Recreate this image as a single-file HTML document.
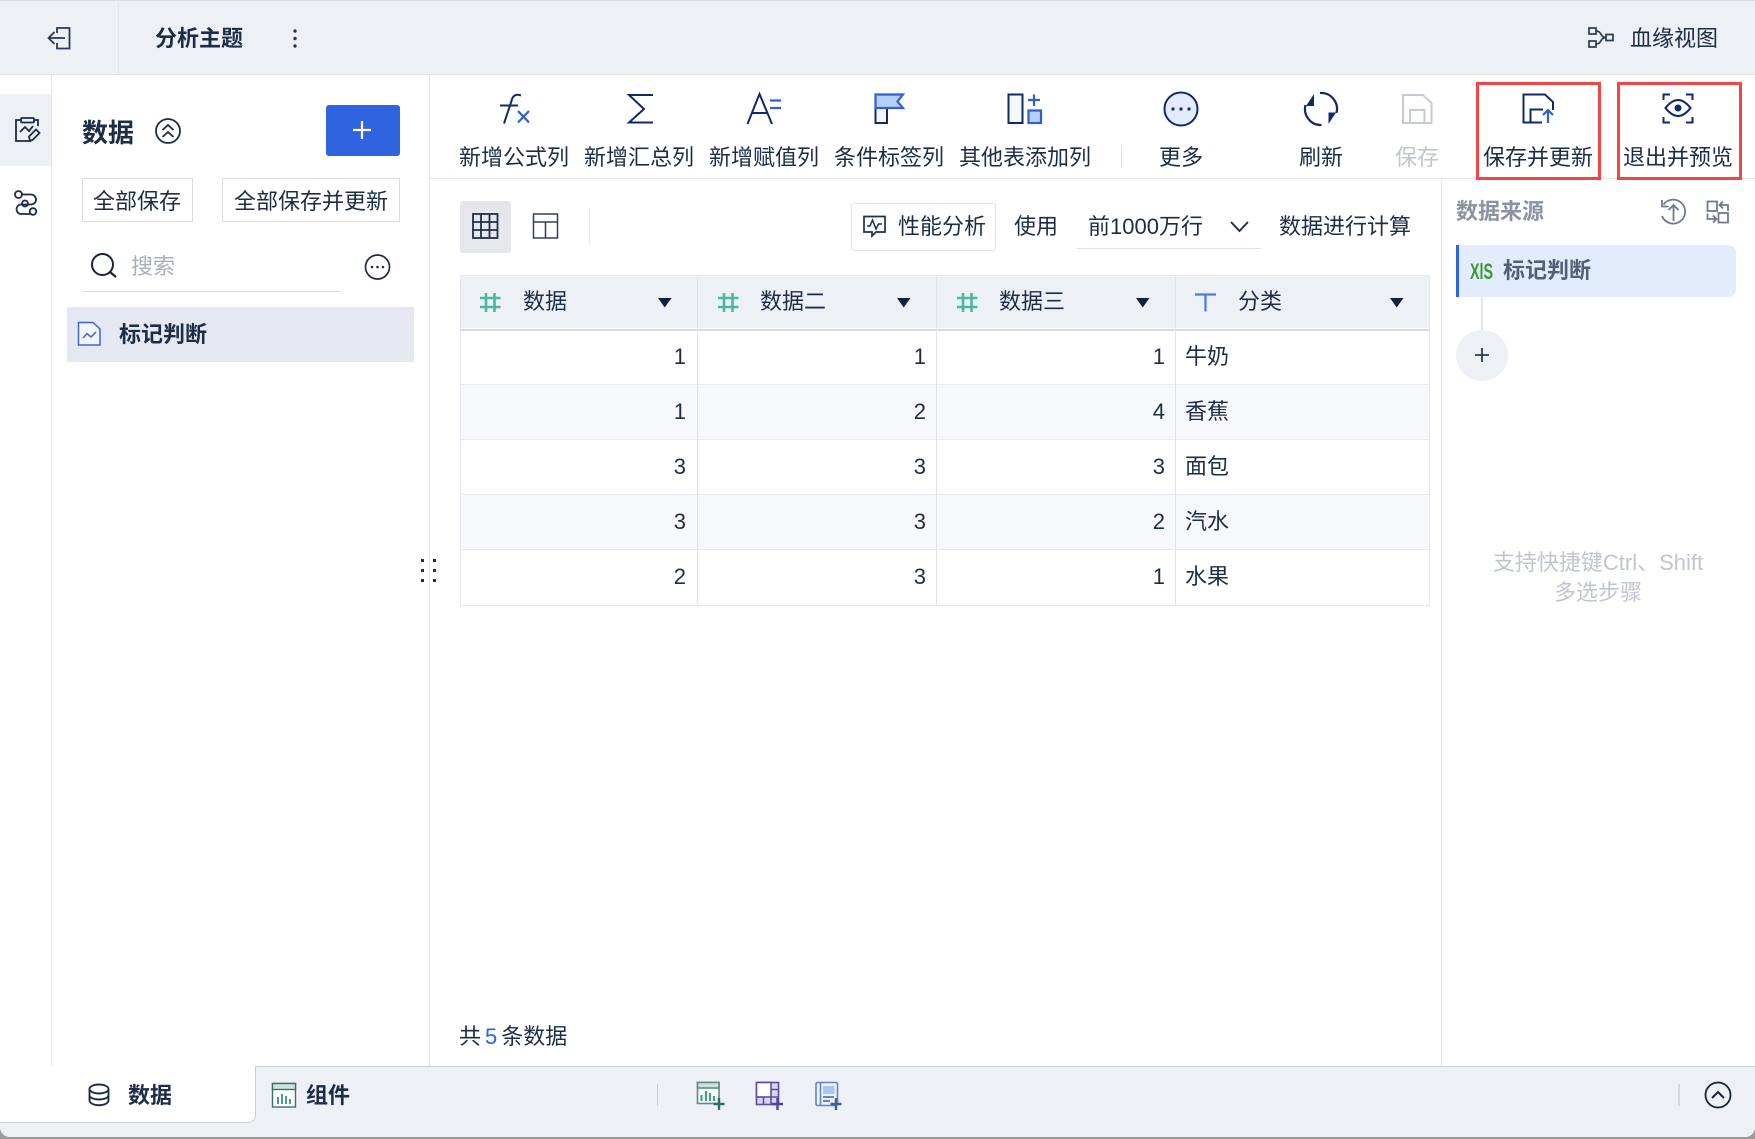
<!DOCTYPE html>
<html lang="zh-CN"><head><meta charset="utf-8"><title>分析主题</title>
<style>
html,body{margin:0;padding:0;width:1755px;height:1139px;overflow:hidden;background:#9b9b9b}
#w{position:absolute;left:0;top:0;width:1755px;height:1137px;background:#fff;overflow:hidden;border-radius:0 0 10px 10px;font-family:"Liberation Sans","Noto Sans CJK SC",sans-serif;font-size:22px;color:#1d2c47}
.b{position:absolute}
.t{position:absolute;line-height:30px;height:30px;white-space:nowrap}
.bd{font-weight:700}
.r{text-align:right;width:60px}
svg{position:absolute;left:0;top:0}
</style></head><body><div id="w">
<!-- backgrounds -->
<div class="b" style="left:0;top:0;width:1755px;height:75px;background:#edf0f5;border-top:1px solid #d9dcdf;border-bottom:1px solid #e3e6ec;box-sizing:border-box"></div>
<div class="b" style="left:118px;top:0;width:1px;height:74px;background:#e3e6ec"></div>
<div class="b" style="left:0;top:94px;width:51px;height:72px;background:#edf0f5"></div>
<div class="b" style="left:51px;top:75px;width:1px;height:991px;background:#e6e8ee"></div>
<div class="b" style="left:429px;top:75px;width:1px;height:991px;background:#e6e8ee"></div>
<div class="b" style="left:430px;top:178px;width:1325px;height:1px;background:#e6e8ee"></div>
<div class="b" style="left:1441px;top:178px;width:1px;height:888px;background:#e6e8ee"></div>
<!-- left panel -->
<div class="b" style="left:326px;top:105px;width:74px;height:51px;background:#2f63df;border-radius:3px"></div>
<div class="b" style="left:82px;top:178px;width:111px;height:44px;border:1px solid #d9dce5;box-sizing:border-box"></div>
<div class="b" style="left:222px;top:178px;width:178px;height:44px;border:1px solid #d9dce5;box-sizing:border-box"></div>
<div class="b" style="left:82px;top:291px;width:259px;height:1px;background:#d9dce3"></div>
<div class="b" style="left:67px;top:307px;width:347px;height:55px;background:#e5e8f0"></div>
<!-- toolbar boxes -->
<div class="b" style="left:460px;top:201px;width:51px;height:52px;background:#e5e7ec;border-radius:3px"></div>
<div class="b" style="left:589px;top:209px;width:1px;height:36px;background:#e9ebf0"></div>
<div class="b" style="left:851px;top:203px;width:145px;height:48px;border:1px solid #dde1ea;border-radius:3px;box-sizing:border-box"></div>
<div class="b" style="left:1077px;top:248px;width:184px;height:1px;background:#dde1ea"></div>
<div class="b" style="left:1121px;top:145px;width:1px;height:23px;background:#dde1ea"></div>
<!-- table -->
<div class="b" style="left:460px;top:275px;width:970px;height:53px;background:#edf0f5;border:1px solid #e6e8ee;border-bottom:0;box-sizing:border-box"></div>
<div class="b" style="left:460px;top:329px;width:970px;height:2px;background:#d8dbe3"></div>
<div class="b" style="left:461px;top:385px;width:968px;height:54px;background:#f7f8fc"></div>
<div class="b" style="left:461px;top:495px;width:968px;height:54px;background:#f7f8fc"></div>
<div class="b" style="left:460px;top:384px;width:970px;height:1px;background:#e6e9f0"></div>
<div class="b" style="left:460px;top:439px;width:970px;height:1px;background:#e6e9f0"></div>
<div class="b" style="left:460px;top:494px;width:970px;height:1px;background:#e6e9f0"></div>
<div class="b" style="left:460px;top:549px;width:970px;height:1px;background:#e6e9f0"></div>
<div class="b" style="left:460px;top:605px;width:970px;height:1px;background:#e6e9f0"></div>
<div class="b" style="left:460px;top:275px;width:1px;height:331px;background:#e6e9f0"></div>
<div class="b" style="left:697px;top:275px;width:1px;height:331px;background:#e0e3ea"></div>
<div class="b" style="left:936px;top:275px;width:1px;height:331px;background:#e0e3ea"></div>
<div class="b" style="left:1175px;top:275px;width:1px;height:331px;background:#e0e3ea"></div>
<div class="b" style="left:1429px;top:275px;width:1px;height:331px;background:#e6e9f0"></div>
<!-- right panel -->
<div class="b" style="left:1456px;top:245px;width:280px;height:52px;background:#e3ecfd;border-left:3px solid #2f63df;border-radius:0 8px 8px 0;box-sizing:border-box"></div>
<div class="b" style="left:1481px;top:297px;width:2px;height:34px;background:#e2e5ea"></div>
<div class="b" style="left:1456px;top:330px;width:52px;height:51px;background:#edf0f5;border-radius:50%"></div>
<!-- red boxes -->
<div class="b" style="left:1476px;top:82px;width:125px;height:98px;border:3px solid #f44545;box-sizing:border-box"></div>
<div class="b" style="left:1617px;top:82px;width:125px;height:98px;border:3px solid #f44545;box-sizing:border-box"></div>
<!-- bottom -->
<div class="b" style="left:0;top:1066px;width:1755px;height:71px;background:#edf0f5;border-top:1px solid #c9ced8;box-sizing:border-box"></div>
<div class="b" style="left:0;top:1066px;width:256px;height:57px;background:#fff;border-right:1px solid #c9ced8;border-bottom:1px solid #c9ced8;border-radius:0 0 8px 0;box-sizing:border-box"></div>
<div class="b" style="left:657px;top:1084px;width:1px;height:22px;background:#c9ced8"></div>
<div class="b" style="left:1678px;top:1084px;width:2px;height:22px;background:#d3d7df"></div>

<!-- text -->
<div class="t bd" style="left:155px;top:24px">分析主题</div>
<div class="t" style="left:1630px;top:24px">血缘视图</div>
<div class="t bd" style="left:82px;top:118px;font-size:26px">数据</div>
<div class="t" style="left:93px;top:187px">全部保存</div>
<div class="t" style="left:234px;top:187px">全部保存并更新</div>
<div class="t" style="left:131px;top:252px;color:#a9afba">搜索</div>
<div class="t bd" style="left:119px;top:320px">标记判断</div>
<div class="t" style="left:459px;top:143px">新增公式列</div>
<div class="t" style="left:584px;top:143px">新增汇总列</div>
<div class="t" style="left:709px;top:143px">新增赋值列</div>
<div class="t" style="left:834px;top:143px">条件标签列</div>
<div class="t" style="left:959px;top:143px">其他表添加列</div>
<div class="t" style="left:1159px;top:143px">更多</div>
<div class="t" style="left:1299px;top:143px">刷新</div>
<div class="t" style="left:1395px;top:143px;color:#c0c5ce">保存</div>
<div class="t" style="left:1483px;top:143px">保存并更新</div>
<div class="t" style="left:1623px;top:143px">退出并预览</div>
<div class="t" style="left:898px;top:212px">性能分析</div>
<div class="t" style="left:1014px;top:212px">使用</div>
<div class="t" style="left:1088px;top:212px">前1000万行</div>
<div class="t" style="left:1279px;top:212px">数据进行计算</div>
<div class="t" style="left:523px;top:287px">数据</div>
<div class="t" style="left:760px;top:287px">数据二</div>
<div class="t" style="left:999px;top:287px">数据三</div>
<div class="t" style="left:1238px;top:287px">分类</div>
<div class="t r" style="left:626px;top:342px">1</div><div class="t r" style="left:866px;top:342px">1</div><div class="t r" style="left:1105px;top:342px">1</div><div class="t" style="left:1185px;top:342px">牛奶</div>
<div class="t r" style="left:626px;top:397px">1</div><div class="t r" style="left:866px;top:397px">2</div><div class="t r" style="left:1105px;top:397px">4</div><div class="t" style="left:1185px;top:397px">香蕉</div>
<div class="t r" style="left:626px;top:452px">3</div><div class="t r" style="left:866px;top:452px">3</div><div class="t r" style="left:1105px;top:452px">3</div><div class="t" style="left:1185px;top:452px">面包</div>
<div class="t r" style="left:626px;top:507px">3</div><div class="t r" style="left:866px;top:507px">3</div><div class="t r" style="left:1105px;top:507px">2</div><div class="t" style="left:1185px;top:507px">汽水</div>
<div class="t r" style="left:626px;top:562px">2</div><div class="t r" style="left:866px;top:562px">3</div><div class="t r" style="left:1105px;top:562px">1</div><div class="t" style="left:1185px;top:562px">水果</div>
<div class="t" style="left:459px;top:1022px">共<span style="color:#2f63df;margin:0 4px">5</span>条数据</div>
<div class="t bd" style="left:1456px;top:197px;color:#8a92a3">数据来源</div>
<div class="t bd" style="left:1503px;top:256px;color:#525f77">标记判断</div>
<div class="t" style="left:1441px;top:548px;width:314px;text-align:center;color:#c0c5ce">支持快捷键Ctrl、Shift</div>
<div class="t" style="left:1441px;top:578px;width:314px;text-align:center;color:#c0c5ce">多选步骤</div>
<div class="t bd" style="left:128px;top:1081px">数据</div>
<div class="t bd" style="left:306px;top:1081px">组件</div>

<!-- icons -->
<svg width="1755" height="1139" viewBox="0 0 1755 1139" fill="none" stroke-width="2">
<g stroke="#2a3a55" stroke-width="1.8">
<path d="M57 33V28H69.5V48.5H57V43"/><path d="M65 38H48.5M54.5 32L48.5 38L54.5 44"/>
</g>
<g fill="#2a3a55"><circle cx="295" cy="31" r="1.7"/><circle cx="295" cy="38.5" r="1.7"/><circle cx="295" cy="46" r="1.7"/></g>
<g stroke="#2a3a55" stroke-width="1.7">
<rect x="1589" y="28" width="7" height="6"/><rect x="1589" y="41" width="7" height="6"/><rect x="1606" y="34.5" width="7" height="6"/>
<path d="M1596 31C1602 31 1600 37.5 1606 37.5M1596 44C1602 44 1600 37.5 1606 37.5"/>
</g>
<!-- rail -->
<g stroke="#1d2c47" stroke-width="1.8">
<path d="M21 120H16V141H31M34 120H38V126"/><rect x="21" y="118" width="13" height="4.5" rx="1"/>
<path d="M20 132L25 127L29 131L33 126"/><path d="M30 141L29 136.5L36 129.5L39.5 133L32.5 140Z"/>
<circle cx="18.5" cy="194.5" r="3.5"/><path d="M22 194.5H31A5 5 0 0 1 31 204.5H20A5 5 0 0 0 20 214H30"/><circle cx="25" cy="203.5" r="3"/><circle cx="33" cy="211.5" r="3.3"/>
</g>
<!-- panel -->
<g stroke="#1d2c47" stroke-width="1.8">
<circle cx="168" cy="131" r="12"/><path d="M162.5 130L168 125L173.5 130M162.5 137L168 132L173.5 137"/>
</g>
<path d="M362 121V139M353 130H371" stroke="#fff" stroke-width="2.2"/>
<circle cx="102.5" cy="264.5" r="10.5" stroke="#16233b"/><path d="M110 272L116 277" stroke="#16233b" stroke-width="2.2"/>
<circle cx="377.5" cy="267" r="12" stroke="#1d2c47" stroke-width="1.7"/>
<g fill="#1d2c47"><circle cx="372" cy="267" r="1.3"/><circle cx="377.5" cy="267" r="1.3"/><circle cx="383" cy="267" r="1.3"/></g>
<path d="M78.5 322.5H93L100 329V345H78.5Z" stroke="#3e63d6" stroke-width="1.5" fill="#f2f5fd"/>
<path d="M83 338L87 333.5L91 337L96 332" stroke="#3e63d6" stroke-width="1.5"/>
<!-- toolbar -->
<g stroke="#10296c" stroke-width="2">
<path d="M521 95.5C515.5 93.5 512.5 96 511.5 101L504 123.5M500 105.5H518"/>
<path d="M653 95H629L644 109L629 122.5H653"/>
<path d="M747.5 124L759.5 94L772 124M752 113H767.5"/>
<rect x="1008.5" y="94.5" width="14" height="28.5" fill="#f4f8ff"/>
<circle cx="1181" cy="109" r="16.5" fill="#e3ecfd"/>
<path d="M875.5 108V123H887V108" fill="#f2f6ff"/>
<path d="M1320 93A16 16 0 0 1 1336.5 113M1321.5 125A16 16 0 0 1 1305.5 105" stroke-width="2.2"/>
<path d="M1523.5 110V94.5H1545L1553 102V110M1523.5 94.5V122.5H1542M1530.5 122.5V109.5H1543"/>
<path d="M1663.5 100V94.5H1670M1686 94.5H1692.5V100M1663.5 117V122.5H1670M1686 122.5H1692.5V117"/>
<path d="M1665.5 108Q1678 92 1690.5 108Q1678 124 1665.5 108Z"/>
</g>
<g stroke="#2f5fd0" stroke-width="2.2">
<path d="M518 111L529 122.5M529 111L518 122.5"/>
<path d="M770 100.5H781M770 108H781"/>
<path d="M875.5 94.5H903L897.5 101.5L903 108H875.5Z" fill="#b7cffb"/>
<path d="M1034 94.5V106M1028 100H1040"/>
<rect x="1028.5" y="110.5" width="12.5" height="12.5" fill="#b7cffb"/>
<path d="M1548 123V110M1543 115L1548 110L1553 115"/>
</g>
<g fill="#10296c">
<rect x="1171.5" y="107.5" width="3" height="3"/><rect x="1179.5" y="107.5" width="3" height="3"/><rect x="1187.5" y="107.5" width="3" height="3"/>
<path d="M1314 94L1314 106L1306 106Z"/><path d="M1328.5 124L1328.5 112.5L1336 112.5Z"/>
<circle cx="1678" cy="108" r="3.5"/>
</g>
<g stroke="#c5cad4" stroke-width="2">
<path d="M1403 95H1423L1431.5 103V123H1403Z"/><path d="M1410 123V110H1424.5V123"/>
</g>
<!-- toggles -->
<g stroke="#1f304b" stroke-width="1.8">
<rect x="473" y="214" width="24.5" height="24"/><path d="M481 214V238M489.5 214V238M473 222H497.5M473 230H497.5"/>
<rect x="533.5" y="214" width="24" height="24" stroke="#2f4058" stroke-width="1.5"/><path d="M533.5 222H557.5M545.5 222V238" stroke="#2f4058" stroke-width="1.5"/>
<path d="M864 216.5H885V232H876L872 236V232H864Z" stroke-width="1.7"/><path d="M867 226H870L872.5 220L876 229L878.5 224H882" stroke-width="1.5"/>
</g>
<path d="M1231 222L1239.5 231L1248 222" stroke="#1d2c47" stroke-width="1.9"/>
<!-- header icons -->
<g stroke="#4db6a4" stroke-width="2.6">
<path d="M486 293V312M494.5 293V312M480 298H500.5M480 307H500.5"/>
<path d="M724 293V312M732.5 293V312M718 298H738.5M718 307H738.5"/>
<path d="M963 293V312M971.5 293V312M957 298H977.5M957 307H977.5"/>
</g>
<path d="M1195 294.5H1216M1205.5 294.5V311.5" stroke="#4a7be8" stroke-width="2.2"/>
<g fill="#10203e"><path d="M658 298H671.5L664.7 307.5Z"/><path d="M897 298H910.5L903.7 307.5Z"/><path d="M1136 298H1149.5L1142.7 307.5Z"/><path d="M1390 298H1403.5L1396.7 307.5Z"/></g>
<!-- drag dots -->
<g fill="#1a2f55"><rect x="421" y="559" width="3" height="3"/><rect x="433" y="559" width="3" height="3"/><rect x="421" y="569" width="3" height="3"/><rect x="433" y="569" width="3" height="3"/><rect x="421" y="579" width="3" height="3"/><rect x="433" y="579" width="3" height="3"/></g>
<!-- right panel -->
<g stroke="#6d7a8f" stroke-width="1.8">
<path d="M1663.5 204.5A12 12 0 1 1 1662 216"/><path d="M1662 200V206.5H1668.5"/><path d="M1673.5 221V205M1668.5 210L1673.5 205L1678.5 210"/>
<rect x="1707.5" y="201.5" width="9.5" height="9.5"/><rect x="1718.5" y="213" width="9.5" height="9.5"/>
<path d="M1728 211V205H1720M1723 201.5L1719.5 205L1723 208.5M1707.5 213.5V219H1716M1713 215.5L1716.5 219L1713 222.5"/>
</g>
<text x="1470" y="279" font-family="Liberation Sans,sans-serif" font-size="22" font-weight="700" fill="#3a9a2e" textLength="23" lengthAdjust="spacingAndGlyphs">XlS</text>
<path d="M1482 348V362M1475 355H1489" stroke="#2a3a55" stroke-width="1.8"/>
<!-- bottom -->
<g stroke="#1d2c47" stroke-width="1.9">
<ellipse cx="99" cy="1089" rx="9.5" ry="4.5"/><path d="M89.5 1089V1100C89.5 1107 108.5 1107 108.5 1100V1089M89.5 1095C89.5 1101 108.5 1101 108.5 1095"/>
</g>
<g stroke="#3c6f68" stroke-width="1.4">
<rect x="272.5" y="1083.5" width="23" height="23.5" fill="#fff"/><rect x="272.5" y="1083.5" width="23" height="6" fill="#cfe3de"/>
<path d="M278 1104V1097M282 1104V1094M286 1104V1096M290 1104V1099" stroke="#4f9a8e" stroke-width="2"/>
</g>
<g stroke="#5f8c85" stroke-width="1.6">
<rect x="697.5" y="1082.5" width="21.5" height="21" fill="#f4f8f7"/><rect x="697.5" y="1082.5" width="21.5" height="5.5" fill="#cfe3de"/>
<path d="M701.5 1101V1095M706 1101V1091M710 1101V1093M714 1101V1096" stroke="#4f9a8e" stroke-width="2.2"/>
</g>
<path d="M719 1098V1110M713.5 1104H724.5" stroke="#2f6b68" stroke-width="2.4"/>
<g stroke="#5b4baa" stroke-width="1.6">
<rect x="756.5" y="1082.5" width="22" height="22" fill="#d9d6f2"/><rect x="756.5" y="1082.5" width="14.5" height="14.5" fill="#fff"/>
<path d="M771 1089.5H778.5M771 1097H778.5M763.5 1097V1104.5M771 1097V1104.5"/>
</g>
<path d="M777.5 1098V1110M771.5 1104H783" stroke="#4f3f9f" stroke-width="2.4"/>
<g stroke="#6484bd" stroke-width="1.6">
<rect x="816" y="1082.5" width="21.5" height="23" rx="1.5" fill="#eef2fa"/><path d="M820.5 1082.5V1105.5"/>
<rect x="823" y="1086" width="11.5" height="8" fill="#aec5ec" stroke="none"/><path d="M823 1097H834M823 1101H830" stroke="#4a78c8" stroke-width="1.8"/>
</g>
<path d="M836 1098V1110M830.5 1104H841.5" stroke="#3b6196" stroke-width="2.4"/>
<g stroke="#16233b" stroke-width="1.8"><circle cx="1718" cy="1095" r="12.5"/><path d="M1712 1098L1718 1092L1724 1098" stroke-width="2"/></g>
</svg>
</div></body></html>
